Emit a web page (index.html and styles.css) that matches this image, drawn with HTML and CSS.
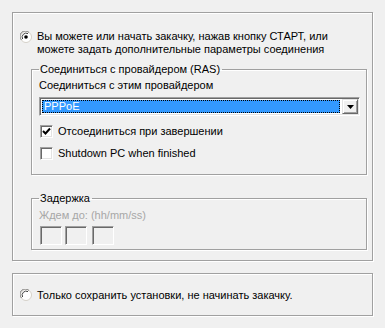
FILE: index.html
```html
<!DOCTYPE html>
<html lang="ru">
<head>
<meta charset="utf-8">
<link rel="stylesheet" href="styles.css">
</head>
<body>
<div class="panel main">
  <div class="radio-row">
    <svg class="radio" width="12" height="12" viewBox="0 0 12 12">
      <circle cx="6" cy="6" r="5.5" fill="#fff" stroke="#d4d0c8"/>
      <path d="M1.5 9 A5 5 0 0 1 9 1.5" fill="none" stroke="#808080" stroke-width="1"/>
      <path d="M2.6 8 A4 4 0 0 1 8 2.6" fill="none" stroke="#404040" stroke-width="1"/>
      <circle cx="6" cy="6" r="1.8" fill="#000"/>
    </svg>
    <span class="radio-text">Вы можете или начать закачку, нажав кнопку СТАРТ, или<br>можете задать дополнительные параметры соединения</span>
  </div>

  <fieldset class="group ras">
    <legend>Соединиться с провайдером (RAS)</legend>
    <div class="label">Соединиться с этим провайдером</div>
    <div class="select">
      <div class="select-value"><span class="focus">PPPoE</span></div>
      <div class="select-btn">
        <svg width="7" height="4" viewBox="0 0 7 4"><path d="M0 0H7L3.5 4Z" fill="#000"/></svg>
      </div>
    </div>
    <div class="check-row">
      <span class="check">
        <svg width="9" height="9" viewBox="0 0 9 9"><path d="M1 4 L3.5 6.5 L8 1.5" fill="none" stroke="#000" stroke-width="2"/></svg>
      </span>
      <span>Отсоединиться при завершении</span>
    </div>
    <div class="check-row second">
      <span class="check"></span>
      <span>Shutdown PC when finished</span>
    </div>
  </fieldset>

  <fieldset class="group delay">
    <legend>Задержка</legend>
    <div class="label disabled">Ждем до: (hh/mm/ss)</div>
    <div class="time-boxes">
      <span class="tbox"></span>
      <span class="tbox"></span>
      <span class="tbox"></span>
    </div>
  </fieldset>
</div>

<div class="panel second-panel">
  <div class="radio-row single">
    <svg class="radio" width="12" height="12" viewBox="0 0 12 12">
      <circle cx="6" cy="6" r="5.5" fill="#fff" stroke="#d4d0c8"/>
      <path d="M1.5 9 A5 5 0 0 1 9 1.5" fill="none" stroke="#808080" stroke-width="1"/>
      <path d="M2.6 8 A4 4 0 0 1 8 2.6" fill="none" stroke="#404040" stroke-width="1"/>
    </svg>
    <span class="radio-text">Только сохранить установки, не начинать закачку.</span>
  </div>
</div>
</body>
</html>
```
FILE: styles.css
```css
html, body {
  margin: 0;
  padding: 0;
}
body {
  background: #f0f0f0;
  font-family: "Liberation Sans", Arial, sans-serif;
  font-size: 11px;
  color: #000;
  width: 385px;
  height: 328px;
  overflow: hidden;
  padding-top: 12px;
  box-sizing: border-box;
}
.panel {
  margin-left: 12px;
  width: 361px;
  box-sizing: border-box;
  border: 1px solid #a0a0a0;
  box-shadow: 1px 1px 0 #fff, inset 1px 1px 0 #fff;
}
.main {
  height: 249px;
  padding: 17px 0 0 7px;
}
.radio-row {
  display: flex;
  align-items: flex-start;
  gap: 5px;
  line-height: 13px;
}
.radio {
  flex: none;
  margin-top: 1px;
}
.group {
  margin: 0;
  padding: 0 0 0 7px;
  border: 1px solid #a0a0a0;
  box-shadow: 1px 1px 0 #fff, inset 1px 1px 0 #fff;
  width: 336px;
  box-sizing: border-box;
  min-width: 0;
}
.group legend {
  padding: 0 2px 0 1px;
  margin-left: 0;
  line-height: 14px;
}
.ras {
  margin: 6px 0 0 11px;
  height: 113px;
}
.label {
  line-height: 14px;
  margin-top: 2px;
}
.label.disabled {
  color: #a7a7a7;
}
.select {
  margin-top: 5px;
  display: flex;
  width: 321px;
  height: 19px;
  box-sizing: border-box;
  border-top: 1px solid #a0a0a0;
  border-left: 1px solid #a0a0a0;
  border-right: 1px solid #fff;
  border-bottom: 1px solid #fff;
  box-shadow: inset 1px 1px 0 #696969, inset -1px -1px 0 #e3e3e3;
  background: #fff;
  padding: 2px;
}
.select-value {
  flex: 1;
  background: #3399ff;
  color: #fff;
  outline: 1px dotted #000;
  outline-offset: -1px;
  line-height: 13px;
  padding-left: 2px;
}
.select-btn {
  flex: none;
  width: 16px;
  margin: -1px -1px -1px 2px;
  box-sizing: border-box;
  background: #f0f0f0;
  border-top: 1px solid #e3e3e3;
  border-left: 1px solid #e3e3e3;
  border-right: 1px solid #696969;
  border-bottom: 1px solid #696969;
  box-shadow: inset 1px 1px 0 #fff, inset -1px -1px 0 #a0a0a0;
  display: flex;
  align-items: center;
  justify-content: center;
}
.check-row {
  display: flex;
  align-items: center;
  gap: 5px;
  margin-top: 8px;
  line-height: 14px;
}
.check-row.second {
  margin-top: 8px;
}
.check {
  flex: none;
  width: 13px;
  height: 13px;
  box-sizing: border-box;
  background: #fff;
  border-top: 1px solid #a0a0a0;
  border-left: 1px solid #a0a0a0;
  border-right: 1px solid #fff;
  border-bottom: 1px solid #fff;
  box-shadow: inset 1px 1px 0 #696969, inset -1px -1px 0 #e3e3e3;
  display: flex;
  align-items: center;
  justify-content: center;
  margin-left: 1px;
}
.delay {
  margin: 16px 0 0 11px;
  height: 59px;
}
.delay .label {
  margin-top: 3px;
}
.time-boxes {
  display: flex;
  gap: 3px;
  margin-top: 4px;
  margin-left: 1px;
}
.tbox {
  width: 22px;
  height: 19px;
  box-sizing: border-box;
  background: #f0f0f0;
  border-top: 1px solid #a0a0a0;
  border-left: 1px solid #a0a0a0;
  border-right: 1px solid #fff;
  border-bottom: 1px solid #fff;
  box-shadow: inset 1px 1px 0 #696969;
}
.tbox:last-child {
  margin-left: 2px;
}
.second-panel {
  margin-top: 12px;
  height: 43px;
  padding: 0 0 0 7px;
  display: flex;
  align-items: center;
}
.single .radio-text {
  line-height: 14px;
}
.single .radio {
  margin-top: 1px;
}
```
